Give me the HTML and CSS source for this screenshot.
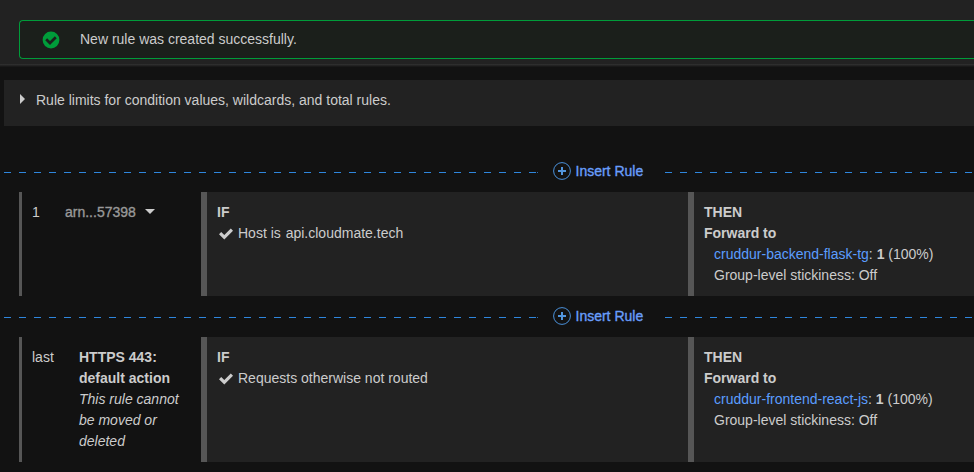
FILE: index.html
```html
<!DOCTYPE html>
<html lang="en">
<head>
<meta charset="utf-8">
<title>Listener rules</title>
<link rel="stylesheet" href="styles.css">
</head>
<body>
<header class="top">
  <div class="alert">
    <svg class="alert-icon" width="18" height="18" viewBox="0 0 18 18"><circle cx="9" cy="9" r="8.4" fill="#009c3a"/><path d="M4.2 8.2 8 12 13.8 6.2" fill="none" stroke="#1b211d" stroke-width="2.7"/></svg>
    <span>New rule was created successfully.</span>
  </div>
</header>
<main>
  <section class="limits">
    <svg class="caret" width="5" height="10" viewBox="0 0 5 10"><path d="M0 0 5 5 0 10Z" fill="#ccc"/></svg>
    <span>Rule limits for condition values, wildcards, and total rules.</span>
  </section>

  <div class="insert first">
    <span class="dash dash-left"></span>
    <a class="insert-link"><svg width="18" height="18" viewBox="0 0 18 18"><circle cx="9" cy="9" r="8.4" fill="none" stroke="#4a90d9" stroke-width="1"/><path d="M9 5v8M5 9h8" stroke="#5295dc" stroke-width="2"/></svg><span>Insert Rule</span></a>
    <span class="dash dash-right"></span>
  </div>
  <section class="rule">
    <div class="cell info">
      <span class="order">1</span>
      <span class="arn">arn...57398</span>
      <svg class="down" width="10" height="5" viewBox="0 0 10 5"><path d="M0 0H10L5 5Z" fill="#ccc"/></svg>
    </div>
    <div class="cell condition">
      <b>IF</b>
      <div class="match"><svg width="14" height="12" viewBox="0 0 14 12"><path d="M0 6.2 2.2 4 5.3 7 11.8.5 14 2.8 5.3 11.5Z" fill="#ccc"/></svg><span>Host is <span class="host">api.cloudmate.tech</span></span></div>
    </div>
    <div class="cell action">
      <b>THEN</b>
      <b>Forward to</b>
      <div class="detail"><a>cruddur-backend-flask-tg</a>: <b>1</b> (100%)</div>
      <div class="detail">Group-level stickiness: Off</div>
    </div>
  </section>

  <div class="insert">
    <span class="dash dash-left"></span>
    <a class="insert-link"><svg width="18" height="18" viewBox="0 0 18 18"><circle cx="9" cy="9" r="8.4" fill="none" stroke="#4a90d9" stroke-width="1"/><path d="M9 5v8M5 9h8" stroke="#5295dc" stroke-width="2"/></svg><span>Insert Rule</span></a>
    <span class="dash dash-right"></span>
  </div>
  <section class="rule last">
    <div class="cell info">
      <span class="order">last</span>
      <div class="default"><b>HTTPS 443: default action</b><i>This rule cannot be moved or deleted</i></div>
    </div>
    <div class="cell condition">
      <b>IF</b>
      <div class="match"><svg width="14" height="12" viewBox="0 0 14 12"><path d="M0 6.2 2.2 4 5.3 7 11.8.5 14 2.8 5.3 11.5Z" fill="#ccc"/></svg><span>Requests otherwise not routed</span></div>
    </div>
    <div class="cell action">
      <b>THEN</b>
      <b>Forward to</b>
      <div class="detail"><a>cruddur-frontend-react-js</a>: <b>1</b> (100%)</div>
      <div class="detail">Group-level stickiness: Off</div>
    </div>
  </section>
</main>
</body>
</html>
```
FILE: styles.css
```css
* { box-sizing: border-box; }
body {
  margin: 0;
  height: 472px;
  overflow: hidden;
  background: #121212;
  color: #ccc;
  font: 14px/21px "Liberation Sans", Arial, sans-serif;
}
svg { display: block; flex: none; }
.top {
  height: 67px;
  padding: 20px 0 0 19px;
  background: linear-gradient(#222 64px, #303030 64px, #2b2b2b 65px, #1b1b1b 66px, #171717 67px);
}
.alert {
  display: flex;
  align-items: center;
  height: 39px;
  padding: 0 0 1px 22px;
  border: 1px solid #009c3a;
  border-right: 0;
  border-radius: 4px 0 0 4px;
  background: #1b1f1b;
}
.alert-icon { margin: 2px 20px 0 0; }
.limits {
  display: flex;
  align-items: flex-start;
  height: 46px;
  margin: 13px 0 0 4px;
  padding: 10px 0 0 16px;
  background: #222;
}
.caret { margin: 4px 11px 0 0; }
.insert {
  display: flex;
  align-items: flex-start;
  height: 41px;
  padding: 10px 0 0 4px;
}
.insert.first { height: 66px; padding-top: 35px; }
.dash {
  height: 1px;
  margin-top: 11px;
  background: repeating-linear-gradient(90deg, #2f86dc 0 7px, transparent 7px 15px);
}
.dash-left { width: 534px; border-right: 1px solid #2f6cab; }
.dash-right { flex: 1; }
.insert-link {
  display: flex;
  align-items: flex-start;
  width: 127px;
  padding-left: 15px;
  gap: 4.5px;
  color: #699efb;
  -webkit-text-stroke: 0.35px #699efb;
}
.insert-link svg { margin-top: 1px; }
.rule {
  display: grid;
  grid-template-columns: 182px 487px 1fr;
  height: 104px;
  margin-left: 19px;
}
.rule.last { height: 125px; }
.cell { padding: 10px; }
.info {
  display: flex;
  align-items: flex-start;
  border-left: 3px solid #565656;
}
.order { flex: none; width: 33px; }
.arn { color: #999; -webkit-text-stroke: 0.35px #999; }
.down { margin: 7px 0 0 9px; }
.default { margin-left: 14px; width: 108px; flex: none; }
.default b, .default i { display: block; }
.condition, .action { border-left: 6px solid #565656; background: #222; }
.action { padding-left: 10px; }
.condition > b, .action > b { display: block; }
.match { display: flex; align-items: flex-start; gap: 5px; padding-left: 2px; }
.match svg { margin-top: 5px; }
.host { margin-left: 1px; }
.detail { padding-left: 10px; white-space: nowrap; }
.detail a { color: #5b9dff; }
```
